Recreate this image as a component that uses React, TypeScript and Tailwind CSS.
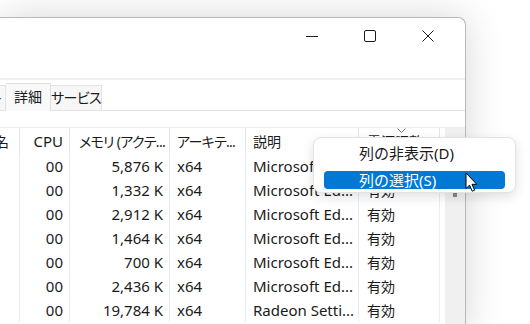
import React from "react";

const FONT = "font-['Segoe_UI','Noto_Sans','Noto_Sans_CJK_JP',sans-serif]";

const rows = [
  ["5,876 K", "Microsoft Ed..."],
  ["1,332 K", "Microsoft Ed..."],
  ["2,912 K", "Microsoft Ed..."],
  ["1,464 K", "Microsoft Ed..."],
  ["700 K", "Microsoft Ed..."],
  ["2,436 K", "Microsoft Ed..."],
  ["19,784 K", "Radeon Setti..."],
];

function J({ children, tight }: { children: React.ReactNode; tight?: boolean }) {
  return (
    <span className={`text-[14px] [font-feature-settings:'palt'] whitespace-nowrap ${tight ? "tracking-[-0.7px]" : ""}`}>
      {children}
    </span>
  );
}

function Cursor() {
  return (
    <svg width="14" height="21" viewBox="0 0 14 21" className="absolute left-[465px] top-[172px]">
      <path
        d="M1 1 L1 16.5 L4.6 13.2 L7.2 19.2 L9.6 18.2 L7 12.3 L11.8 12.3 Z"
        fill="white"
        stroke="black"
        strokeWidth="1"
        strokeLinejoin="miter"
      />
    </svg>
  );
}

export default function App() {
  return (
    <div className={`relative w-[530px] h-[324px] overflow-hidden bg-white ${FONT} text-[#1a1a1a]`}>
      <div className="pt-[17px]">
        <div className="w-[466px] h-[320px] bg-white rounded-tr-[8px] border-t border-r border-[#b9b9b9] shadow-[0_0_38px_rgba(0,0,0,0.16)] flex flex-col">
          {/* caption */}
          <div className="h-[36px] flex justify-end items-center pr-[8px]">
            <div className="w-[58px] h-full flex items-center justify-center">
              <svg width="12" height="12" viewBox="0 0 12 12"><line x1="0" y1="6.5" x2="12" y2="6.5" stroke="#1a1a1a" strokeWidth="1" /></svg>
            </div>
            <div className="w-[58px] h-full flex items-center justify-center">
              <svg width="12" height="12" viewBox="0 0 12 12"><rect x="0.5" y="0.5" width="11" height="11" rx="1.5" fill="none" stroke="#1a1a1a" strokeWidth="1" /></svg>
            </div>
            <div className="w-[58px] h-full flex items-center justify-center">
              <svg width="12" height="12" viewBox="0 0 12 12"><path d="M0.5 0.5 L11.5 11.5 M11.5 0.5 L0.5 11.5" stroke="#1a1a1a" strokeWidth="1" /></svg>
            </div>
          </div>
          <div className="h-[24px]" />
          <div className="h-[2px] bg-[#efefef]" />
          {/* tabs */}
          <div className="h-[31px] flex items-end border-b border-[#e3e3e3]">
            <div className="w-[6px] h-[25px] overflow-hidden flex justify-end items-center border-r border-t border-[#e3e3e3] bg-[#f7f7f7] leading-none">
              <span className="shrink-0 pr-[3px]"><J>ユーザー</J></span>
            </div>
            <div className="w-[45px] h-[28px] flex items-center justify-center border-t border-r border-[#e0e0e0] bg-[#f9f9f9] leading-none -mb-px pb-[1px]">
              <J>詳細</J>
            </div>
            <div className="w-[51px] h-[25px] flex items-center justify-center border-t border-r border-[#e3e3e3] bg-[#f7f7f7] leading-none">
              <J tight>サービス</J>
            </div>
          </div>
          <div className="h-[16px]" />
          {/* list */}
          <div className="flex flex-1 border-t border-[#ececec]">
            <div className="w-[440px] flex flex-col text-[15px]">
              <div className="h-[26px] flex relative">
                <div className="w-[20px] border-r border-[#e5e5e5] overflow-hidden flex justify-end items-center">
                  <span className="shrink-0 pr-[10px]"><J>ユーザー名</J></span>
                </div>
                <div className="w-[50px] border-r border-[#e5e5e5] flex justify-end items-center pr-[6px]">CPU</div>
                <div className="w-[100px] border-r border-[#e5e5e5] flex justify-end items-center pr-[4px] whitespace-nowrap"><J tight>メモリ (アクテ...</J></div>
                <div className="w-[76px] border-r border-[#e5e5e5] flex items-center pl-[7px] whitespace-nowrap"><J tight>アーキテ...</J></div>
                <div className="w-[113px] border-r border-[#e5e5e5] flex items-center pl-[7px]"><J>説明</J></div>
                <div className="w-[81px] border-r border-[#e5e5e5] flex items-center pl-[8px] relative">
                  <J>電源調整</J>
                  <svg width="9" height="6" viewBox="0 0 9 6" className="absolute left-[38px] top-[0px]">
                    <path d="M0.5 0.5 L4.5 4.5 L8.5 0.5" fill="none" stroke="#7a7a7a" strokeWidth="1" />
                  </svg>
                </div>
              </div>
              {rows.map(([mem, desc], i) => (
                <div key={i} className="h-[24px] flex">
                  <div className="w-[20px] border-r border-[#e6edf7]" />
                  <div className="w-[50px] border-r border-[#e6edf7] flex justify-end items-center pr-[6px]">00</div>
                  <div className="w-[100px] border-r border-[#e6edf7] flex justify-end items-center pr-[6px]">{mem}</div>
                  <div className="w-[76px] border-r border-[#e6edf7] flex items-center pl-[7px]">x64</div>
                  <div className="w-[113px] border-r border-[#e6edf7] flex items-center pl-[7px] whitespace-nowrap">{desc}</div>
                  <div className="w-[81px] border-r border-[#e6edf7] flex items-center pl-[8px]"><J>有効</J></div>
                </div>
              ))}
            </div>
            <div className="w-[5px]" />
            <div className="w-[20px] bg-[#f0f0f0] flex flex-col items-center">
              <div className="h-[65px]" />
              <div className="w-[4px] h-[4px] bg-[#858585]" />
            </div>
          </div>
        </div>
      </div>

      {/* context menu */}
      <div className="absolute left-[313px] top-[137px] w-[203px] h-[56px] bg-white border border-[#e3e3e3] rounded-[8px] shadow-[0_4px_12px_rgba(0,0,0,0.12)] px-[10px] pt-[3px] text-[15px] leading-none">
        <div className="h-[25px] flex items-center pl-[35px]">列の非表示(D)</div>
        <div className="mt-[5px] h-[18px] rounded-[4px] bg-[#0078d4] text-white flex items-center pl-[35px]">列の選択(S)</div>
      </div>
      <Cursor />
    </div>
  );
}
